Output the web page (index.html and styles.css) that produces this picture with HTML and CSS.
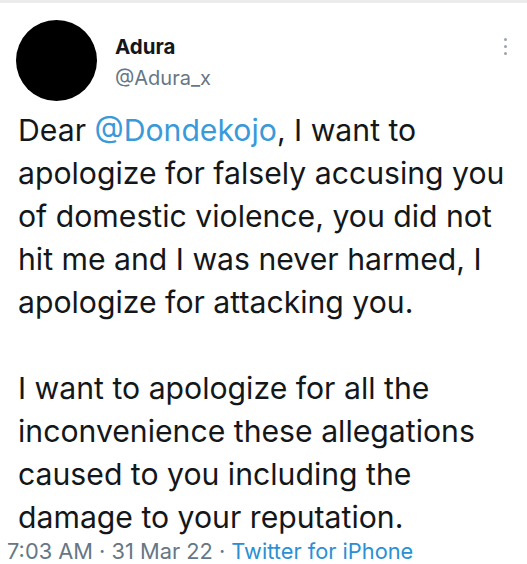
FILE: index.html
```html
<!DOCTYPE html>
<html>
<head>
<meta charset="utf-8">
<link rel="stylesheet" href="styles.css">
</head>
<body>
<div class="tweet">
  <div class="header">
    <div class="avatar"></div>
    <div class="names">
      <div class="name">Adura</div>
      <div class="handle">@Adura_x</div>
    </div>
    <div class="more"><span></span><span></span><span></span></div>
  </div>
  <div class="text">
    <p>Dear <span class="mention">@Dondekojo</span>, I want to<br>apologize for falsely accusing you<br>of domestic violence, you did not<br>hit me and I was never harmed, I<br>apologize for attacking you.</p>
    <p>I want to apologize for all the<br>inconvenience these allegations<br>caused to you including the<br>damage to your reputation.</p>
  </div>
  <div class="meta">7:03 AM · 31 Mar 22 · <span class="source">Twitter for iPhone</span></div>
</div>
</body>
</html>
```
FILE: styles.css
```css
html, body {
  margin: 0;
  padding: 0;
  background: #fff;
}
.tweet {
  width: 527px;
  height: 564px;
  border-top: 3px solid #ebebeb;
  box-sizing: border-box;
  font-family: Inter, "Liberation Sans", sans-serif;
  color: #14171a;
  overflow: hidden;
}
.header {
  display: flex;
  align-items: flex-start;
  padding: 17px 0 0 16px;
}
.avatar {
  width: 81px;
  height: 81px;
  border-radius: 50%;
  background: #000;
  flex: none;
}
.names {
  margin-left: 18px;
  padding-top: 14px;
  flex: 1;
}
.name {
  font-weight: 700;
  font-size: 20.5px;
  line-height: 26px;
}
.handle {
  font-size: 20px;
  line-height: 26px;
  color: #657786;
  margin-top: 5px;
}
.more {
  display: flex;
  flex-direction: column;
  gap: 4px;
  padding: 18px 20px 0 0;
}
.more span {
  width: 3px;
  height: 3px;
  border-radius: 50%;
  background: #9aa4ad;
}
.text {
  padding: 8px 0 0 18px;
  font-size: 30.2px;
  line-height: 43px;
  white-space: nowrap;
}
.text p {
  margin: 0 0 43px 0;
}
.text p:last-child {
  margin-bottom: 0;
}
.mention {
  color: #3a9ad9;
}
.meta {
  padding: 0 0 0 7px;
  font-size: 21.8px;
  line-height: 24px;
  color: #657786;
}
.source {
  color: #2b8fd4;
}
```
